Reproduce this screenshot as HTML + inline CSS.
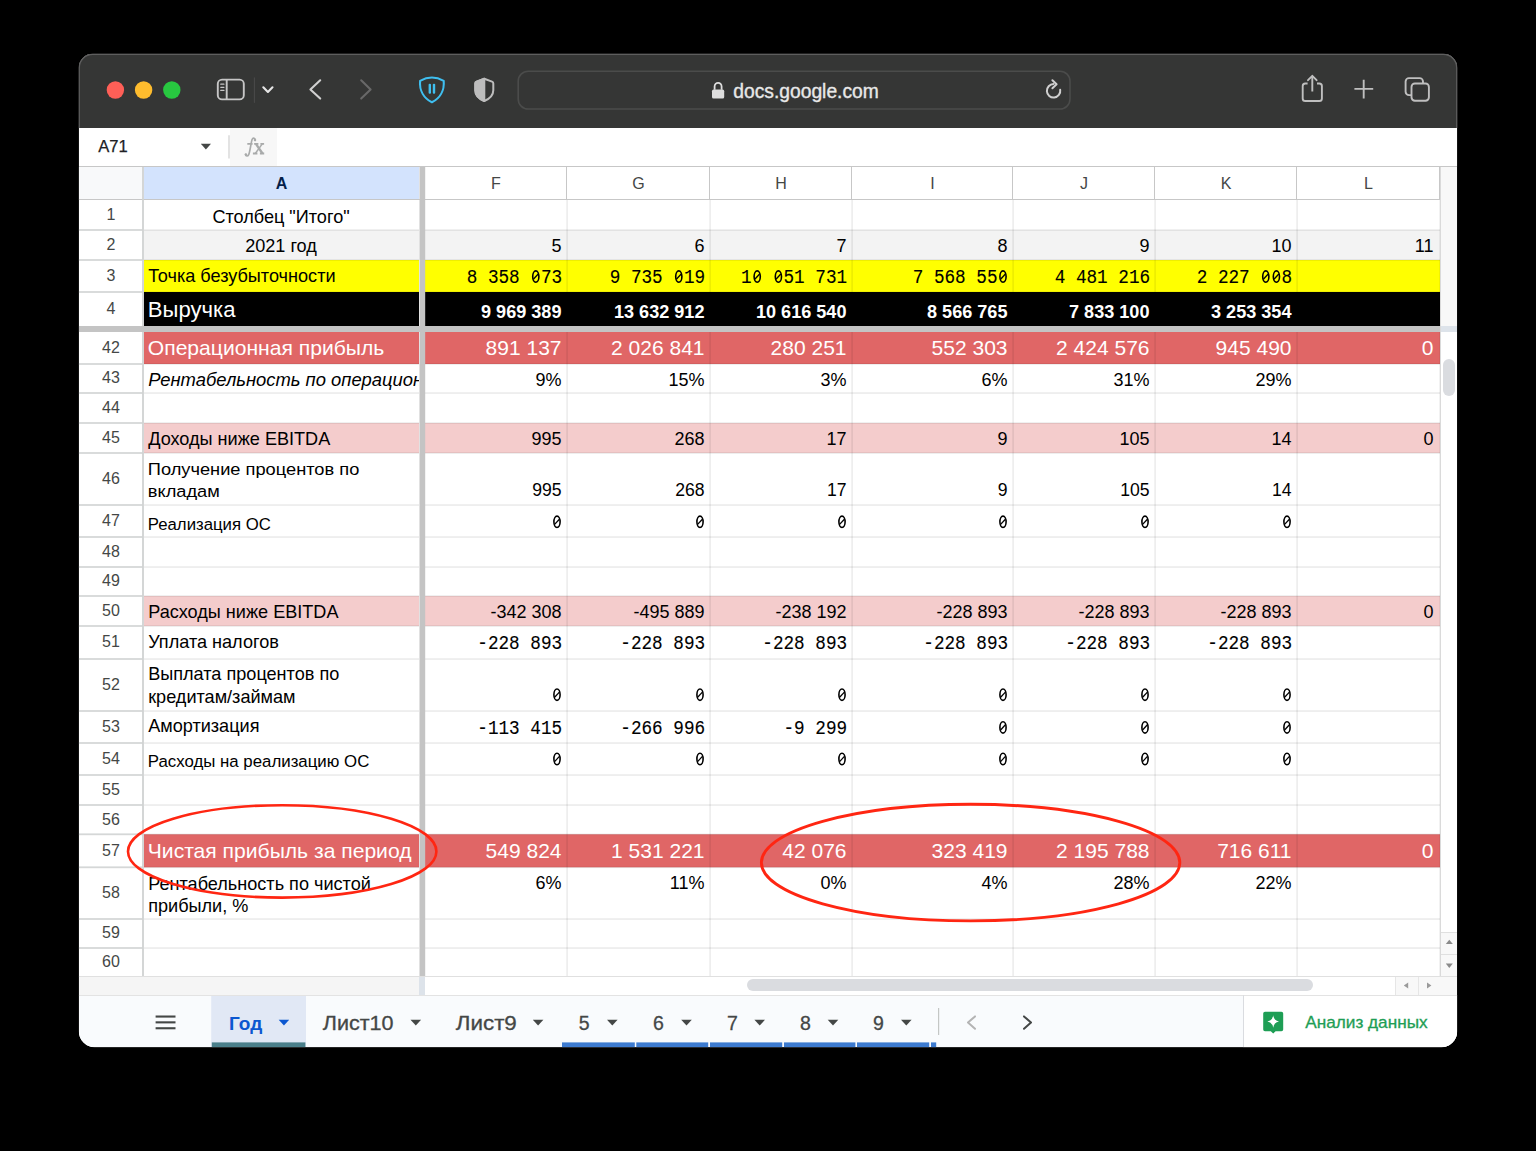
<!DOCTYPE html>
<html><head><meta charset="utf-8"><style>
html,body{margin:0;padding:0;background:#000;width:1536px;height:1151px;overflow:hidden}
svg{display:block}
</style></head><body>
<svg width="1536" height="1151" viewBox="0 0 1536 1151">
<defs><clipPath id="win"><path d="M92.8,53.8 H1443.2 A14,14 0 0 1 1457.2,67.8 V1031.3 A16,16 0 0 1 1441.2,1047.3 H94.8 A16,16 0 0 1 78.8,1031.3 V67.8 A14,14 0 0 1 92.8,53.8 Z"/></clipPath><clipPath id="tbclip"><rect x="0" y="0" width="1536" height="128"/></clipPath><clipPath id="colA"><rect x="144" y="167" width="275" height="809"/></clipPath></defs>
<rect x="0" y="0" width="1536" height="1151" fill="#000" />
<g clip-path="url(#win)">
<rect x="78.8" y="53.8" width="1378.4" height="993.5" fill="#ffffff" />
<rect x="78.8" y="53.8" width="1378.4" height="74.2" fill="#353635" />
<rect x="78.8" y="128" width="1378.4" height="38" fill="#ffffff" />
<rect x="230" y="128" width="47" height="38" fill="#f7f7f7" />
<rect x="78.8" y="166" width="1378.4" height="1" fill="#c7c7c7" />
<rect x="78.8" y="167" width="1361.2" height="33" fill="#ffffff" />
<rect x="78.8" y="167" width="64.2" height="33" fill="#f8f9fa" />
<rect x="144" y="167" width="275" height="33" fill="#d3e3fd" />
<rect x="78.8" y="200" width="64.2" height="776" fill="#ffffff" />
<rect x="144" y="230" width="275" height="30" fill="#f3f3f3" />
<rect x="425" y="230" width="1015" height="30" fill="#f3f3f3" />
<rect x="144" y="260" width="275" height="32" fill="#ffff00" />
<rect x="425" y="260" width="1015" height="32" fill="#ffff00" />
<rect x="144" y="292" width="275" height="34" fill="#000000" />
<rect x="425" y="292" width="1015" height="34" fill="#000000" />
<rect x="144" y="332" width="275" height="32" fill="#e06666" />
<rect x="425" y="332" width="1015" height="32" fill="#e06666" />
<rect x="144" y="423" width="275" height="30" fill="#f4cccc" />
<rect x="425" y="423" width="1015" height="30" fill="#f4cccc" />
<rect x="144" y="596" width="275" height="30" fill="#f4cccc" />
<rect x="425" y="596" width="1015" height="30" fill="#f4cccc" />
<rect x="144" y="834.3" width="275" height="33.0" fill="#e06666" />
<rect x="425" y="834.3" width="1015" height="33.0" fill="#e06666" />
<rect x="144" y="229.3" width="275" height="1.5" fill="rgba(0,0,0,0.085)" />
<rect x="425" y="229.3" width="1015" height="1.5" fill="rgba(0,0,0,0.085)" />
<rect x="78.8" y="229.1" width="64.2" height="1.8" fill="#d5d7d7" />
<rect x="144" y="259.3" width="275" height="1.5" fill="rgba(0,0,0,0.085)" />
<rect x="425" y="259.3" width="1015" height="1.5" fill="rgba(0,0,0,0.085)" />
<rect x="78.8" y="259.1" width="64.2" height="1.8" fill="#d5d7d7" />
<rect x="144" y="291.3" width="275" height="1.5" fill="rgba(0,0,0,0.085)" />
<rect x="425" y="291.3" width="1015" height="1.5" fill="rgba(0,0,0,0.085)" />
<rect x="78.8" y="291.1" width="64.2" height="1.8" fill="#d5d7d7" />
<rect x="144" y="363.3" width="275" height="1.5" fill="rgba(0,0,0,0.085)" />
<rect x="425" y="363.3" width="1015" height="1.5" fill="rgba(0,0,0,0.085)" />
<rect x="78.8" y="363.1" width="64.2" height="1.8" fill="#d5d7d7" />
<rect x="144" y="392.3" width="275" height="1.5" fill="rgba(0,0,0,0.085)" />
<rect x="425" y="392.3" width="1015" height="1.5" fill="rgba(0,0,0,0.085)" />
<rect x="78.8" y="392.1" width="64.2" height="1.8" fill="#d5d7d7" />
<rect x="144" y="422.3" width="275" height="1.5" fill="rgba(0,0,0,0.085)" />
<rect x="425" y="422.3" width="1015" height="1.5" fill="rgba(0,0,0,0.085)" />
<rect x="78.8" y="422.1" width="64.2" height="1.8" fill="#d5d7d7" />
<rect x="144" y="452.3" width="275" height="1.5" fill="rgba(0,0,0,0.085)" />
<rect x="425" y="452.3" width="1015" height="1.5" fill="rgba(0,0,0,0.085)" />
<rect x="78.8" y="452.1" width="64.2" height="1.8" fill="#d5d7d7" />
<rect x="144" y="504.3" width="275" height="1.5" fill="rgba(0,0,0,0.085)" />
<rect x="425" y="504.3" width="1015" height="1.5" fill="rgba(0,0,0,0.085)" />
<rect x="78.8" y="504.1" width="64.2" height="1.8" fill="#d5d7d7" />
<rect x="144" y="536.3" width="275" height="1.5" fill="rgba(0,0,0,0.085)" />
<rect x="425" y="536.3" width="1015" height="1.5" fill="rgba(0,0,0,0.085)" />
<rect x="78.8" y="536.1" width="64.2" height="1.8" fill="#d5d7d7" />
<rect x="144" y="566.3" width="275" height="1.5" fill="rgba(0,0,0,0.085)" />
<rect x="425" y="566.3" width="1015" height="1.5" fill="rgba(0,0,0,0.085)" />
<rect x="78.8" y="566.1" width="64.2" height="1.8" fill="#d5d7d7" />
<rect x="144" y="595.3" width="275" height="1.5" fill="rgba(0,0,0,0.085)" />
<rect x="425" y="595.3" width="1015" height="1.5" fill="rgba(0,0,0,0.085)" />
<rect x="78.8" y="595.1" width="64.2" height="1.8" fill="#d5d7d7" />
<rect x="144" y="625.3" width="275" height="1.5" fill="rgba(0,0,0,0.085)" />
<rect x="425" y="625.3" width="1015" height="1.5" fill="rgba(0,0,0,0.085)" />
<rect x="78.8" y="625.1" width="64.2" height="1.8" fill="#d5d7d7" />
<rect x="144" y="658.3" width="275" height="1.5" fill="rgba(0,0,0,0.085)" />
<rect x="425" y="658.3" width="1015" height="1.5" fill="rgba(0,0,0,0.085)" />
<rect x="78.8" y="658.1" width="64.2" height="1.8" fill="#d5d7d7" />
<rect x="144" y="710.3" width="275" height="1.5" fill="rgba(0,0,0,0.085)" />
<rect x="425" y="710.3" width="1015" height="1.5" fill="rgba(0,0,0,0.085)" />
<rect x="78.8" y="710.1" width="64.2" height="1.8" fill="#d5d7d7" />
<rect x="144" y="742.3" width="275" height="1.5" fill="rgba(0,0,0,0.085)" />
<rect x="425" y="742.3" width="1015" height="1.5" fill="rgba(0,0,0,0.085)" />
<rect x="78.8" y="742.1" width="64.2" height="1.8" fill="#d5d7d7" />
<rect x="144" y="774.3" width="275" height="1.5" fill="rgba(0,0,0,0.085)" />
<rect x="425" y="774.3" width="1015" height="1.5" fill="rgba(0,0,0,0.085)" />
<rect x="78.8" y="774.1" width="64.2" height="1.8" fill="#d5d7d7" />
<rect x="144" y="804.3" width="275" height="1.5" fill="rgba(0,0,0,0.085)" />
<rect x="425" y="804.3" width="1015" height="1.5" fill="rgba(0,0,0,0.085)" />
<rect x="78.8" y="804.1" width="64.2" height="1.8" fill="#d5d7d7" />
<rect x="144" y="833.5999999999999" width="275" height="1.5" fill="rgba(0,0,0,0.085)" />
<rect x="425" y="833.5999999999999" width="1015" height="1.5" fill="rgba(0,0,0,0.085)" />
<rect x="78.8" y="833.4" width="64.2" height="1.8" fill="#d5d7d7" />
<rect x="144" y="866.5999999999999" width="275" height="1.5" fill="rgba(0,0,0,0.085)" />
<rect x="425" y="866.5999999999999" width="1015" height="1.5" fill="rgba(0,0,0,0.085)" />
<rect x="78.8" y="866.4" width="64.2" height="1.8" fill="#d5d7d7" />
<rect x="144" y="918.3" width="275" height="1.5" fill="rgba(0,0,0,0.085)" />
<rect x="425" y="918.3" width="1015" height="1.5" fill="rgba(0,0,0,0.085)" />
<rect x="78.8" y="918.1" width="64.2" height="1.8" fill="#d5d7d7" />
<rect x="144" y="947.3" width="275" height="1.5" fill="rgba(0,0,0,0.085)" />
<rect x="425" y="947.3" width="1015" height="1.5" fill="rgba(0,0,0,0.085)" />
<rect x="78.8" y="947.1" width="64.2" height="1.8" fill="#d5d7d7" />
<rect x="566.4" y="200" width="1.4" height="126" fill="rgba(0,0,0,0.085)" />
<rect x="566.4" y="332" width="1.4" height="644" fill="rgba(0,0,0,0.085)" />
<rect x="709.4" y="200" width="1.4" height="126" fill="rgba(0,0,0,0.085)" />
<rect x="709.4" y="332" width="1.4" height="644" fill="rgba(0,0,0,0.085)" />
<rect x="851.4" y="200" width="1.4" height="126" fill="rgba(0,0,0,0.085)" />
<rect x="851.4" y="332" width="1.4" height="644" fill="rgba(0,0,0,0.085)" />
<rect x="1012.4" y="200" width="1.4" height="126" fill="rgba(0,0,0,0.085)" />
<rect x="1012.4" y="332" width="1.4" height="644" fill="rgba(0,0,0,0.085)" />
<rect x="1154.4" y="200" width="1.4" height="126" fill="rgba(0,0,0,0.085)" />
<rect x="1154.4" y="332" width="1.4" height="644" fill="rgba(0,0,0,0.085)" />
<rect x="1296.4" y="200" width="1.4" height="126" fill="rgba(0,0,0,0.085)" />
<rect x="1296.4" y="332" width="1.4" height="644" fill="rgba(0,0,0,0.085)" />
<rect x="1439.4" y="200" width="1.4" height="126" fill="rgba(0,0,0,0.085)" />
<rect x="1439.4" y="332" width="1.4" height="644" fill="rgba(0,0,0,0.085)" />
<rect x="78.8" y="199" width="1361.2" height="1" fill="#c7c7c7" />
<rect x="566" y="167" width="1" height="33" fill="#c7c7c7" />
<rect x="709" y="167" width="1" height="33" fill="#c7c7c7" />
<rect x="851" y="167" width="1" height="33" fill="#c7c7c7" />
<rect x="1012" y="167" width="1" height="33" fill="#c7c7c7" />
<rect x="1154" y="167" width="1" height="33" fill="#c7c7c7" />
<rect x="1296" y="167" width="1" height="33" fill="#c7c7c7" />
<rect x="1439" y="167" width="1" height="33" fill="#c7c7c7" />
<rect x="142.1" y="167" width="1.8" height="809" fill="#d0d2d2" />
<rect x="419.5" y="167" width="5.7" height="809" fill="#c4c4c4" />
<rect x="78.8" y="326" width="1361.2" height="6" fill="#c4c4c4" />
<rect x="1440" y="167" width="17" height="809" fill="#f8f8f8" />
<rect x="1440" y="167" width="1" height="809" fill="#dadada" />
<rect x="1441" y="332" width="16" height="600" fill="#ffffff" />
<rect x="1441" y="326" width="16" height="6" fill="#dde3ea" />
<rect x="1443" y="359" width="12" height="37" fill="#dadce0" rx="6"/>
<rect x="78.8" y="976" width="340.2" height="19" fill="#f5f5f5" />
<rect x="419" y="976" width="6" height="19" fill="#dde3ea" />
<rect x="425" y="976" width="1032" height="19" fill="#ffffff" />
<rect x="1395" y="976" width="62" height="19" fill="#f8f8f8" />
<rect x="78.8" y="976" width="1378.2" height="1" fill="#e0e0e0" />
<rect x="747" y="979" width="566" height="12" fill="#dadce0" rx="6"/>
<text x="281.5" y="188.7" font-family='"Liberation Sans", sans-serif' font-size="16" fill="#041e49" text-anchor="middle" font-weight="bold" font-style="normal" >A</text>
<text x="496.0" y="188.7" font-family='"Liberation Sans", sans-serif' font-size="16" fill="#444746" text-anchor="middle" font-weight="normal" font-style="normal" >F</text>
<text x="638.5" y="188.7" font-family='"Liberation Sans", sans-serif' font-size="16" fill="#444746" text-anchor="middle" font-weight="normal" font-style="normal" >G</text>
<text x="781.0" y="188.7" font-family='"Liberation Sans", sans-serif' font-size="16" fill="#444746" text-anchor="middle" font-weight="normal" font-style="normal" >H</text>
<text x="932.5" y="188.7" font-family='"Liberation Sans", sans-serif' font-size="16" fill="#444746" text-anchor="middle" font-weight="normal" font-style="normal" >I</text>
<text x="1084.0" y="188.7" font-family='"Liberation Sans", sans-serif' font-size="16" fill="#444746" text-anchor="middle" font-weight="normal" font-style="normal" >J</text>
<text x="1226.0" y="188.7" font-family='"Liberation Sans", sans-serif' font-size="16" fill="#444746" text-anchor="middle" font-weight="normal" font-style="normal" >K</text>
<text x="1368.5" y="188.7" font-family='"Liberation Sans", sans-serif' font-size="16" fill="#444746" text-anchor="middle" font-weight="normal" font-style="normal" >L</text>
<text x="111" y="219.9" font-family='"Liberation Sans", sans-serif' font-size="16" fill="#444746" text-anchor="middle" font-weight="normal" font-style="normal" >1</text>
<text x="111" y="249.9" font-family='"Liberation Sans", sans-serif' font-size="16" fill="#444746" text-anchor="middle" font-weight="normal" font-style="normal" >2</text>
<text x="111" y="280.9" font-family='"Liberation Sans", sans-serif' font-size="16" fill="#444746" text-anchor="middle" font-weight="normal" font-style="normal" >3</text>
<text x="111" y="313.9" font-family='"Liberation Sans", sans-serif' font-size="16" fill="#444746" text-anchor="middle" font-weight="normal" font-style="normal" >4</text>
<text x="111" y="352.9" font-family='"Liberation Sans", sans-serif' font-size="16" fill="#444746" text-anchor="middle" font-weight="normal" font-style="normal" >42</text>
<text x="111" y="383.4" font-family='"Liberation Sans", sans-serif' font-size="16" fill="#444746" text-anchor="middle" font-weight="normal" font-style="normal" >43</text>
<text x="111" y="412.9" font-family='"Liberation Sans", sans-serif' font-size="16" fill="#444746" text-anchor="middle" font-weight="normal" font-style="normal" >44</text>
<text x="111" y="442.9" font-family='"Liberation Sans", sans-serif' font-size="16" fill="#444746" text-anchor="middle" font-weight="normal" font-style="normal" >45</text>
<text x="111" y="483.9" font-family='"Liberation Sans", sans-serif' font-size="16" fill="#444746" text-anchor="middle" font-weight="normal" font-style="normal" >46</text>
<text x="111" y="525.9" font-family='"Liberation Sans", sans-serif' font-size="16" fill="#444746" text-anchor="middle" font-weight="normal" font-style="normal" >47</text>
<text x="111" y="556.9" font-family='"Liberation Sans", sans-serif' font-size="16" fill="#444746" text-anchor="middle" font-weight="normal" font-style="normal" >48</text>
<text x="111" y="586.4" font-family='"Liberation Sans", sans-serif' font-size="16" fill="#444746" text-anchor="middle" font-weight="normal" font-style="normal" >49</text>
<text x="111" y="615.9" font-family='"Liberation Sans", sans-serif' font-size="16" fill="#444746" text-anchor="middle" font-weight="normal" font-style="normal" >50</text>
<text x="111" y="647.4" font-family='"Liberation Sans", sans-serif' font-size="16" fill="#444746" text-anchor="middle" font-weight="normal" font-style="normal" >51</text>
<text x="111" y="689.9" font-family='"Liberation Sans", sans-serif' font-size="16" fill="#444746" text-anchor="middle" font-weight="normal" font-style="normal" >52</text>
<text x="111" y="731.9" font-family='"Liberation Sans", sans-serif' font-size="16" fill="#444746" text-anchor="middle" font-weight="normal" font-style="normal" >53</text>
<text x="111" y="763.9" font-family='"Liberation Sans", sans-serif' font-size="16" fill="#444746" text-anchor="middle" font-weight="normal" font-style="normal" >54</text>
<text x="111" y="794.9" font-family='"Liberation Sans", sans-serif' font-size="16" fill="#444746" text-anchor="middle" font-weight="normal" font-style="normal" >55</text>
<text x="111" y="824.55" font-family='"Liberation Sans", sans-serif' font-size="16" fill="#444746" text-anchor="middle" font-weight="normal" font-style="normal" >56</text>
<text x="111" y="855.6999999999999" font-family='"Liberation Sans", sans-serif' font-size="16" fill="#444746" text-anchor="middle" font-weight="normal" font-style="normal" >57</text>
<text x="111" y="898.05" font-family='"Liberation Sans", sans-serif' font-size="16" fill="#444746" text-anchor="middle" font-weight="normal" font-style="normal" >58</text>
<text x="111" y="938.4" font-family='"Liberation Sans", sans-serif' font-size="16" fill="#444746" text-anchor="middle" font-weight="normal" font-style="normal" >59</text>
<text x="111" y="966.9" font-family='"Liberation Sans", sans-serif' font-size="16" fill="#444746" text-anchor="middle" font-weight="normal" font-style="normal" >60</text>
<text x="281" y="223" font-family='"Liberation Sans", sans-serif' font-size="18.1" fill="#000" text-anchor="middle" font-weight="normal" font-style="normal" >Столбец "Итого"</text>
<text x="281" y="252" font-family='"Liberation Sans", sans-serif' font-size="18.1" fill="#000" text-anchor="middle" font-weight="normal" font-style="normal" >2021 год</text>
<text x="561.5" y="252" font-family='"Liberation Sans", sans-serif' font-size="18" fill="#000" text-anchor="end" font-weight="normal" font-style="normal" >5</text>
<text x="704.5" y="252" font-family='"Liberation Sans", sans-serif' font-size="18" fill="#000" text-anchor="end" font-weight="normal" font-style="normal" >6</text>
<text x="846.5" y="252" font-family='"Liberation Sans", sans-serif' font-size="18" fill="#000" text-anchor="end" font-weight="normal" font-style="normal" >7</text>
<text x="1007.5" y="252" font-family='"Liberation Sans", sans-serif' font-size="18" fill="#000" text-anchor="end" font-weight="normal" font-style="normal" >8</text>
<text x="1149.5" y="252" font-family='"Liberation Sans", sans-serif' font-size="18" fill="#000" text-anchor="end" font-weight="normal" font-style="normal" >9</text>
<text x="1291.5" y="252" font-family='"Liberation Sans", sans-serif' font-size="18" fill="#000" text-anchor="end" font-weight="normal" font-style="normal" >10</text>
<text x="1433.5" y="252" font-family='"Liberation Sans", sans-serif' font-size="18" fill="#000" text-anchor="end" font-weight="normal" font-style="normal" >11</text>
<text x="148.2" y="281.5" font-family='"Liberation Sans", sans-serif' font-size="18.1" fill="#000" text-anchor="start" font-weight="normal" font-style="normal" >Точка безубыточности</text>
<text x="562.1" y="283" font-family='"Liberation Mono", monospace' font-size="20" fill="#000" text-anchor="end" font-weight="normal" font-style="normal" textLength="95.4" lengthAdjust="spacingAndGlyphs" stroke="#000" stroke-width="0.12">8 358  73</text>
<ellipse cx="535.80" cy="276.60" rx="3.1" ry="5.7" fill="none" stroke="#000" stroke-width="1.6"/>
<line x1="538.20" y1="274.00" x2="533.40" y2="279.20" stroke="#000" stroke-width="1.3"/>
<text x="705.1" y="283" font-family='"Liberation Mono", monospace' font-size="20" fill="#000" text-anchor="end" font-weight="normal" font-style="normal" textLength="95.4" lengthAdjust="spacingAndGlyphs" stroke="#000" stroke-width="0.12">9 735  19</text>
<ellipse cx="678.80" cy="276.60" rx="3.1" ry="5.7" fill="none" stroke="#000" stroke-width="1.6"/>
<line x1="681.20" y1="274.00" x2="676.40" y2="279.20" stroke="#000" stroke-width="1.3"/>
<text x="847.1" y="283" font-family='"Liberation Mono", monospace' font-size="20" fill="#000" text-anchor="end" font-weight="normal" font-style="normal" textLength="106.0" lengthAdjust="spacingAndGlyphs" stroke="#000" stroke-width="0.12">1   51 731</text>
<ellipse cx="757.20" cy="276.60" rx="3.1" ry="5.7" fill="none" stroke="#000" stroke-width="1.6"/>
<line x1="759.60" y1="274.00" x2="754.80" y2="279.20" stroke="#000" stroke-width="1.3"/>
<ellipse cx="778.40" cy="276.60" rx="3.1" ry="5.7" fill="none" stroke="#000" stroke-width="1.6"/>
<line x1="780.80" y1="274.00" x2="776.00" y2="279.20" stroke="#000" stroke-width="1.3"/>
<text x="1008.1" y="283" font-family='"Liberation Mono", monospace' font-size="20" fill="#000" text-anchor="end" font-weight="normal" font-style="normal" textLength="95.4" lengthAdjust="spacingAndGlyphs" stroke="#000" stroke-width="0.12">7 568 55 </text>
<ellipse cx="1003.00" cy="276.60" rx="3.1" ry="5.7" fill="none" stroke="#000" stroke-width="1.6"/>
<line x1="1005.40" y1="274.00" x2="1000.60" y2="279.20" stroke="#000" stroke-width="1.3"/>
<text x="1150.1" y="283" font-family='"Liberation Mono", monospace' font-size="20" fill="#000" text-anchor="end" font-weight="normal" font-style="normal" textLength="95.4" lengthAdjust="spacingAndGlyphs" stroke="#000" stroke-width="0.12">4 481 216</text>
<text x="1292.1" y="283" font-family='"Liberation Mono", monospace' font-size="20" fill="#000" text-anchor="end" font-weight="normal" font-style="normal" textLength="95.4" lengthAdjust="spacingAndGlyphs" stroke="#000" stroke-width="0.12">2 227   8</text>
<ellipse cx="1265.80" cy="276.60" rx="3.1" ry="5.7" fill="none" stroke="#000" stroke-width="1.6"/>
<line x1="1268.20" y1="274.00" x2="1263.40" y2="279.20" stroke="#000" stroke-width="1.3"/>
<ellipse cx="1276.40" cy="276.60" rx="3.1" ry="5.7" fill="none" stroke="#000" stroke-width="1.6"/>
<line x1="1278.80" y1="274.00" x2="1274.00" y2="279.20" stroke="#000" stroke-width="1.3"/>
<text x="147.8" y="317" font-family='"Liberation Sans", sans-serif' font-size="22.1" fill="#fff" text-anchor="start" font-weight="normal" font-style="normal" >Выручка</text>
<text x="561.5" y="318.2" font-family='"Liberation Sans", sans-serif' font-size="18.1" fill="#fff" text-anchor="end" font-weight="bold" font-style="normal" >9 969 389</text>
<text x="704.5" y="318.2" font-family='"Liberation Sans", sans-serif' font-size="18.1" fill="#fff" text-anchor="end" font-weight="bold" font-style="normal" >13 632 912</text>
<text x="846.5" y="318.2" font-family='"Liberation Sans", sans-serif' font-size="18.1" fill="#fff" text-anchor="end" font-weight="bold" font-style="normal" >10 616 540</text>
<text x="1007.5" y="318.2" font-family='"Liberation Sans", sans-serif' font-size="18.1" fill="#fff" text-anchor="end" font-weight="bold" font-style="normal" >8 566 765</text>
<text x="1149.5" y="318.2" font-family='"Liberation Sans", sans-serif' font-size="18.1" fill="#fff" text-anchor="end" font-weight="bold" font-style="normal" >7 833 100</text>
<text x="1291.5" y="318.2" font-family='"Liberation Sans", sans-serif' font-size="18.1" fill="#fff" text-anchor="end" font-weight="bold" font-style="normal" >3 253 354</text>
<text x="147.8" y="355" font-family='"Liberation Sans", sans-serif' font-size="21.1" fill="#fff" text-anchor="start" font-weight="normal" font-style="normal" >Операционная прибыль</text>
<text x="561.5" y="354.8" font-family='"Liberation Sans", sans-serif' font-size="21" fill="#fff" text-anchor="end" font-weight="normal" font-style="normal" >891 137</text>
<text x="704.5" y="354.8" font-family='"Liberation Sans", sans-serif' font-size="21" fill="#fff" text-anchor="end" font-weight="normal" font-style="normal" >2 026 841</text>
<text x="846.5" y="354.8" font-family='"Liberation Sans", sans-serif' font-size="21" fill="#fff" text-anchor="end" font-weight="normal" font-style="normal" >280 251</text>
<text x="1007.5" y="354.8" font-family='"Liberation Sans", sans-serif' font-size="21" fill="#fff" text-anchor="end" font-weight="normal" font-style="normal" >552 303</text>
<text x="1149.5" y="354.8" font-family='"Liberation Sans", sans-serif' font-size="21" fill="#fff" text-anchor="end" font-weight="normal" font-style="normal" >2 424 576</text>
<text x="1291.5" y="354.8" font-family='"Liberation Sans", sans-serif' font-size="21" fill="#fff" text-anchor="end" font-weight="normal" font-style="normal" >945 490</text>
<text x="1433.5" y="354.8" font-family='"Liberation Sans", sans-serif' font-size="21" fill="#fff" text-anchor="end" font-weight="normal" font-style="normal" >0</text>
<g clip-path="url(#colA)">
<text x="148.2" y="385.5" font-family='"Liberation Sans", sans-serif' font-size="18.4" fill="#000" text-anchor="start" font-weight="normal" font-style="italic" >Рентабельность по операционной деятельности, %</text>
</g>
<text x="561.5" y="385.5" font-family='"Liberation Sans", sans-serif' font-size="18" fill="#000" text-anchor="end" font-weight="normal" font-style="normal" >9%</text>
<text x="704.5" y="385.5" font-family='"Liberation Sans", sans-serif' font-size="18" fill="#000" text-anchor="end" font-weight="normal" font-style="normal" >15%</text>
<text x="846.5" y="385.5" font-family='"Liberation Sans", sans-serif' font-size="18" fill="#000" text-anchor="end" font-weight="normal" font-style="normal" >3%</text>
<text x="1007.5" y="385.5" font-family='"Liberation Sans", sans-serif' font-size="18" fill="#000" text-anchor="end" font-weight="normal" font-style="normal" >6%</text>
<text x="1149.5" y="385.5" font-family='"Liberation Sans", sans-serif' font-size="18" fill="#000" text-anchor="end" font-weight="normal" font-style="normal" >31%</text>
<text x="1291.5" y="385.5" font-family='"Liberation Sans", sans-serif' font-size="18" fill="#000" text-anchor="end" font-weight="normal" font-style="normal" >29%</text>
<text x="148.2" y="445" font-family='"Liberation Sans", sans-serif' font-size="18.1" fill="#000" text-anchor="start" font-weight="normal" font-style="normal" >Доходы ниже EBITDA</text>
<text x="561.5" y="445" font-family='"Liberation Sans", sans-serif' font-size="18" fill="#000" text-anchor="end" font-weight="normal" font-style="normal" >995</text>
<text x="704.5" y="445" font-family='"Liberation Sans", sans-serif' font-size="18" fill="#000" text-anchor="end" font-weight="normal" font-style="normal" >268</text>
<text x="846.5" y="445" font-family='"Liberation Sans", sans-serif' font-size="18" fill="#000" text-anchor="end" font-weight="normal" font-style="normal" >17</text>
<text x="1007.5" y="445" font-family='"Liberation Sans", sans-serif' font-size="18" fill="#000" text-anchor="end" font-weight="normal" font-style="normal" >9</text>
<text x="1149.5" y="445" font-family='"Liberation Sans", sans-serif' font-size="18" fill="#000" text-anchor="end" font-weight="normal" font-style="normal" >105</text>
<text x="1291.5" y="445" font-family='"Liberation Sans", sans-serif' font-size="18" fill="#000" text-anchor="end" font-weight="normal" font-style="normal" >14</text>
<text x="1433.5" y="445" font-family='"Liberation Sans", sans-serif' font-size="18" fill="#000" text-anchor="end" font-weight="normal" font-style="normal" >0</text>
<text x="147.8" y="474.5" font-family='"Liberation Sans", sans-serif' font-size="17.4" fill="#000" text-anchor="start" font-weight="normal" font-style="normal" textLength="211.5" lengthAdjust="spacingAndGlyphs" >Получение процентов по</text>
<text x="147.8" y="497.2" font-family='"Liberation Sans", sans-serif' font-size="17.4" fill="#000" text-anchor="start" font-weight="normal" font-style="normal" textLength="72" lengthAdjust="spacingAndGlyphs" >вкладам</text>
<text x="561.5" y="495.5" font-family='"Liberation Sans", sans-serif' font-size="17.6" fill="#000" text-anchor="end" font-weight="normal" font-style="normal" >995</text>
<text x="704.5" y="495.5" font-family='"Liberation Sans", sans-serif' font-size="17.6" fill="#000" text-anchor="end" font-weight="normal" font-style="normal" >268</text>
<text x="846.5" y="495.5" font-family='"Liberation Sans", sans-serif' font-size="17.6" fill="#000" text-anchor="end" font-weight="normal" font-style="normal" >17</text>
<text x="1007.5" y="495.5" font-family='"Liberation Sans", sans-serif' font-size="17.6" fill="#000" text-anchor="end" font-weight="normal" font-style="normal" >9</text>
<text x="1149.5" y="495.5" font-family='"Liberation Sans", sans-serif' font-size="17.6" fill="#000" text-anchor="end" font-weight="normal" font-style="normal" >105</text>
<text x="1291.5" y="495.5" font-family='"Liberation Sans", sans-serif' font-size="17.6" fill="#000" text-anchor="end" font-weight="normal" font-style="normal" >14</text>
<text x="147.8" y="529.6" font-family='"Liberation Sans", sans-serif' font-size="17.4" fill="#000" text-anchor="start" font-weight="normal" font-style="normal" textLength="123" lengthAdjust="spacingAndGlyphs" >Реализация ОС</text>
<ellipse cx="557.00" cy="521.80" rx="3.1" ry="5.7" fill="none" stroke="#000" stroke-width="1.6"/>
<line x1="559.40" y1="519.20" x2="554.60" y2="524.40" stroke="#000" stroke-width="1.3"/>
<ellipse cx="700.00" cy="521.80" rx="3.1" ry="5.7" fill="none" stroke="#000" stroke-width="1.6"/>
<line x1="702.40" y1="519.20" x2="697.60" y2="524.40" stroke="#000" stroke-width="1.3"/>
<ellipse cx="842.00" cy="521.80" rx="3.1" ry="5.7" fill="none" stroke="#000" stroke-width="1.6"/>
<line x1="844.40" y1="519.20" x2="839.60" y2="524.40" stroke="#000" stroke-width="1.3"/>
<ellipse cx="1003.00" cy="521.80" rx="3.1" ry="5.7" fill="none" stroke="#000" stroke-width="1.6"/>
<line x1="1005.40" y1="519.20" x2="1000.60" y2="524.40" stroke="#000" stroke-width="1.3"/>
<ellipse cx="1145.00" cy="521.80" rx="3.1" ry="5.7" fill="none" stroke="#000" stroke-width="1.6"/>
<line x1="1147.40" y1="519.20" x2="1142.60" y2="524.40" stroke="#000" stroke-width="1.3"/>
<ellipse cx="1287.00" cy="521.80" rx="3.1" ry="5.7" fill="none" stroke="#000" stroke-width="1.6"/>
<line x1="1289.40" y1="519.20" x2="1284.60" y2="524.40" stroke="#000" stroke-width="1.3"/>
<text x="148.2" y="617.6" font-family='"Liberation Sans", sans-serif' font-size="18.1" fill="#000" text-anchor="start" font-weight="normal" font-style="normal" >Расходы ниже EBITDA</text>
<text x="561.5" y="617.6" font-family='"Liberation Sans", sans-serif' font-size="18" fill="#000" text-anchor="end" font-weight="normal" font-style="normal" >-342 308</text>
<text x="704.5" y="617.6" font-family='"Liberation Sans", sans-serif' font-size="18" fill="#000" text-anchor="end" font-weight="normal" font-style="normal" >-495 889</text>
<text x="846.5" y="617.6" font-family='"Liberation Sans", sans-serif' font-size="18" fill="#000" text-anchor="end" font-weight="normal" font-style="normal" >-238 192</text>
<text x="1007.5" y="617.6" font-family='"Liberation Sans", sans-serif' font-size="18" fill="#000" text-anchor="end" font-weight="normal" font-style="normal" >-228 893</text>
<text x="1149.5" y="617.6" font-family='"Liberation Sans", sans-serif' font-size="18" fill="#000" text-anchor="end" font-weight="normal" font-style="normal" >-228 893</text>
<text x="1291.5" y="617.6" font-family='"Liberation Sans", sans-serif' font-size="18" fill="#000" text-anchor="end" font-weight="normal" font-style="normal" >-228 893</text>
<text x="1433.5" y="617.6" font-family='"Liberation Sans", sans-serif' font-size="18" fill="#000" text-anchor="end" font-weight="normal" font-style="normal" >0</text>
<text x="148.2" y="648" font-family='"Liberation Sans", sans-serif' font-size="18.1" fill="#000" text-anchor="start" font-weight="normal" font-style="normal" >Уплата налогов</text>
<text x="562.1" y="648.7" font-family='"Liberation Mono", monospace' font-size="20" fill="#000" text-anchor="end" font-weight="normal" font-style="normal" textLength="84.8" lengthAdjust="spacingAndGlyphs" stroke="#000" stroke-width="0.12">-228 893</text>
<text x="705.1" y="648.7" font-family='"Liberation Mono", monospace' font-size="20" fill="#000" text-anchor="end" font-weight="normal" font-style="normal" textLength="84.8" lengthAdjust="spacingAndGlyphs" stroke="#000" stroke-width="0.12">-228 893</text>
<text x="847.1" y="648.7" font-family='"Liberation Mono", monospace' font-size="20" fill="#000" text-anchor="end" font-weight="normal" font-style="normal" textLength="84.8" lengthAdjust="spacingAndGlyphs" stroke="#000" stroke-width="0.12">-228 893</text>
<text x="1008.1" y="648.7" font-family='"Liberation Mono", monospace' font-size="20" fill="#000" text-anchor="end" font-weight="normal" font-style="normal" textLength="84.8" lengthAdjust="spacingAndGlyphs" stroke="#000" stroke-width="0.12">-228 893</text>
<text x="1150.1" y="648.7" font-family='"Liberation Mono", monospace' font-size="20" fill="#000" text-anchor="end" font-weight="normal" font-style="normal" textLength="84.8" lengthAdjust="spacingAndGlyphs" stroke="#000" stroke-width="0.12">-228 893</text>
<text x="1292.1" y="648.7" font-family='"Liberation Mono", monospace' font-size="20" fill="#000" text-anchor="end" font-weight="normal" font-style="normal" textLength="84.8" lengthAdjust="spacingAndGlyphs" stroke="#000" stroke-width="0.12">-228 893</text>
<text x="148.2" y="679.7" font-family='"Liberation Sans", sans-serif' font-size="18.1" fill="#000" text-anchor="start" font-weight="normal" font-style="normal" >Выплата процентов по</text>
<text x="148.2" y="702.5" font-family='"Liberation Sans", sans-serif' font-size="18.1" fill="#000" text-anchor="start" font-weight="normal" font-style="normal" >кредитам/займам</text>
<ellipse cx="557.00" cy="694.70" rx="3.1" ry="5.7" fill="none" stroke="#000" stroke-width="1.6"/>
<line x1="559.40" y1="692.10" x2="554.60" y2="697.30" stroke="#000" stroke-width="1.3"/>
<ellipse cx="700.00" cy="694.70" rx="3.1" ry="5.7" fill="none" stroke="#000" stroke-width="1.6"/>
<line x1="702.40" y1="692.10" x2="697.60" y2="697.30" stroke="#000" stroke-width="1.3"/>
<ellipse cx="842.00" cy="694.70" rx="3.1" ry="5.7" fill="none" stroke="#000" stroke-width="1.6"/>
<line x1="844.40" y1="692.10" x2="839.60" y2="697.30" stroke="#000" stroke-width="1.3"/>
<ellipse cx="1003.00" cy="694.70" rx="3.1" ry="5.7" fill="none" stroke="#000" stroke-width="1.6"/>
<line x1="1005.40" y1="692.10" x2="1000.60" y2="697.30" stroke="#000" stroke-width="1.3"/>
<ellipse cx="1145.00" cy="694.70" rx="3.1" ry="5.7" fill="none" stroke="#000" stroke-width="1.6"/>
<line x1="1147.40" y1="692.10" x2="1142.60" y2="697.30" stroke="#000" stroke-width="1.3"/>
<ellipse cx="1287.00" cy="694.70" rx="3.1" ry="5.7" fill="none" stroke="#000" stroke-width="1.6"/>
<line x1="1289.40" y1="692.10" x2="1284.60" y2="697.30" stroke="#000" stroke-width="1.3"/>
<text x="148.2" y="731.6" font-family='"Liberation Sans", sans-serif' font-size="18.1" fill="#000" text-anchor="start" font-weight="normal" font-style="normal" >Амортизация</text>
<text x="562.1" y="733.8" font-family='"Liberation Mono", monospace' font-size="20" fill="#000" text-anchor="end" font-weight="normal" font-style="normal" textLength="84.8" lengthAdjust="spacingAndGlyphs" stroke="#000" stroke-width="0.12">-113 415</text>
<text x="705.1" y="733.8" font-family='"Liberation Mono", monospace' font-size="20" fill="#000" text-anchor="end" font-weight="normal" font-style="normal" textLength="84.8" lengthAdjust="spacingAndGlyphs" stroke="#000" stroke-width="0.12">-266 996</text>
<text x="847.1" y="733.8" font-family='"Liberation Mono", monospace' font-size="20" fill="#000" text-anchor="end" font-weight="normal" font-style="normal" textLength="63.6" lengthAdjust="spacingAndGlyphs" stroke="#000" stroke-width="0.12">-9 299</text>
<ellipse cx="1003.00" cy="727.40" rx="3.1" ry="5.7" fill="none" stroke="#000" stroke-width="1.6"/>
<line x1="1005.40" y1="724.80" x2="1000.60" y2="730.00" stroke="#000" stroke-width="1.3"/>
<ellipse cx="1145.00" cy="727.40" rx="3.1" ry="5.7" fill="none" stroke="#000" stroke-width="1.6"/>
<line x1="1147.40" y1="724.80" x2="1142.60" y2="730.00" stroke="#000" stroke-width="1.3"/>
<ellipse cx="1287.00" cy="727.40" rx="3.1" ry="5.7" fill="none" stroke="#000" stroke-width="1.6"/>
<line x1="1289.40" y1="724.80" x2="1284.60" y2="730.00" stroke="#000" stroke-width="1.3"/>
<text x="147.8" y="767.2" font-family='"Liberation Sans", sans-serif' font-size="17.4" fill="#000" text-anchor="start" font-weight="normal" font-style="normal" textLength="221.5" lengthAdjust="spacingAndGlyphs" >Расходы на реализацию ОС</text>
<ellipse cx="557.00" cy="759.00" rx="3.1" ry="5.7" fill="none" stroke="#000" stroke-width="1.6"/>
<line x1="559.40" y1="756.40" x2="554.60" y2="761.60" stroke="#000" stroke-width="1.3"/>
<ellipse cx="700.00" cy="759.00" rx="3.1" ry="5.7" fill="none" stroke="#000" stroke-width="1.6"/>
<line x1="702.40" y1="756.40" x2="697.60" y2="761.60" stroke="#000" stroke-width="1.3"/>
<ellipse cx="842.00" cy="759.00" rx="3.1" ry="5.7" fill="none" stroke="#000" stroke-width="1.6"/>
<line x1="844.40" y1="756.40" x2="839.60" y2="761.60" stroke="#000" stroke-width="1.3"/>
<ellipse cx="1003.00" cy="759.00" rx="3.1" ry="5.7" fill="none" stroke="#000" stroke-width="1.6"/>
<line x1="1005.40" y1="756.40" x2="1000.60" y2="761.60" stroke="#000" stroke-width="1.3"/>
<ellipse cx="1145.00" cy="759.00" rx="3.1" ry="5.7" fill="none" stroke="#000" stroke-width="1.6"/>
<line x1="1147.40" y1="756.40" x2="1142.60" y2="761.60" stroke="#000" stroke-width="1.3"/>
<ellipse cx="1287.00" cy="759.00" rx="3.1" ry="5.7" fill="none" stroke="#000" stroke-width="1.6"/>
<line x1="1289.40" y1="756.40" x2="1284.60" y2="761.60" stroke="#000" stroke-width="1.3"/>
<text x="147.8" y="857.7" font-family='"Liberation Sans", sans-serif' font-size="21.1" fill="#fff" text-anchor="start" font-weight="normal" font-style="normal" >Чистая прибыль за период</text>
<text x="561.5" y="857.6" font-family='"Liberation Sans", sans-serif' font-size="21" fill="#fff" text-anchor="end" font-weight="normal" font-style="normal" >549 824</text>
<text x="704.5" y="857.6" font-family='"Liberation Sans", sans-serif' font-size="21" fill="#fff" text-anchor="end" font-weight="normal" font-style="normal" >1 531 221</text>
<text x="846.5" y="857.6" font-family='"Liberation Sans", sans-serif' font-size="21" fill="#fff" text-anchor="end" font-weight="normal" font-style="normal" >42 076</text>
<text x="1007.5" y="857.6" font-family='"Liberation Sans", sans-serif' font-size="21" fill="#fff" text-anchor="end" font-weight="normal" font-style="normal" >323 419</text>
<text x="1149.5" y="857.6" font-family='"Liberation Sans", sans-serif' font-size="21" fill="#fff" text-anchor="end" font-weight="normal" font-style="normal" >2 195 788</text>
<text x="1291.5" y="857.6" font-family='"Liberation Sans", sans-serif' font-size="21" fill="#fff" text-anchor="end" font-weight="normal" font-style="normal" >716 611</text>
<text x="1433.5" y="857.6" font-family='"Liberation Sans", sans-serif' font-size="21" fill="#fff" text-anchor="end" font-weight="normal" font-style="normal" >0</text>
<text x="148.2" y="889.5" font-family='"Liberation Sans", sans-serif' font-size="18.1" fill="#000" text-anchor="start" font-weight="normal" font-style="normal" >Рентабельность по чистой</text>
<text x="148.2" y="912" font-family='"Liberation Sans", sans-serif' font-size="18.1" fill="#000" text-anchor="start" font-weight="normal" font-style="normal" >прибыли, %</text>
<text x="561.5" y="889" font-family='"Liberation Sans", sans-serif' font-size="18" fill="#000" text-anchor="end" font-weight="normal" font-style="normal" >6%</text>
<text x="704.5" y="889" font-family='"Liberation Sans", sans-serif' font-size="18" fill="#000" text-anchor="end" font-weight="normal" font-style="normal" >11%</text>
<text x="846.5" y="889" font-family='"Liberation Sans", sans-serif' font-size="18" fill="#000" text-anchor="end" font-weight="normal" font-style="normal" >0%</text>
<text x="1007.5" y="889" font-family='"Liberation Sans", sans-serif' font-size="18" fill="#000" text-anchor="end" font-weight="normal" font-style="normal" >4%</text>
<text x="1149.5" y="889" font-family='"Liberation Sans", sans-serif' font-size="18" fill="#000" text-anchor="end" font-weight="normal" font-style="normal" >28%</text>
<text x="1291.5" y="889" font-family='"Liberation Sans", sans-serif' font-size="18" fill="#000" text-anchor="end" font-weight="normal" font-style="normal" >22%</text>
<ellipse cx="282.2" cy="851.4" rx="154.2" ry="46.2" fill="none" stroke="#ff2612" stroke-width="2.6"/>
<ellipse cx="970.6" cy="862.6" rx="209.2" ry="58.3" fill="none" stroke="#ff2612" stroke-width="2.9"/>
<circle cx="115.4" cy="90" r="8.7" fill="#fe5f57"/>
<circle cx="143.6" cy="90" r="8.7" fill="#febc2e"/>
<circle cx="171.8" cy="90" r="8.7" fill="#28c840"/>
<rect x="217.8" y="79.6" width="26" height="19.8" rx="4.2" fill="none" stroke="#c6c6c6" stroke-width="1.9"/>
<line x1="226.7" y1="80" x2="226.7" y2="99.5" stroke="#c6c6c6" stroke-width="1.9"/>
<line x1="220.8" y1="84.2" x2="223.9" y2="84.2" stroke="#c6c6c6" stroke-width="1.3" stroke-linecap="round"/>
<line x1="220.8" y1="87.3" x2="223.9" y2="87.3" stroke="#c6c6c6" stroke-width="1.3" stroke-linecap="round"/>
<line x1="220.8" y1="90.4" x2="223.9" y2="90.4" stroke="#c6c6c6" stroke-width="1.3" stroke-linecap="round"/>
<line x1="254.4" y1="77.5" x2="254.4" y2="102.8" stroke="#4c4c4c" stroke-width="1"/>
<polyline points="263.3,87.3 267.9,91.9 272.5,87.3" fill="none" stroke="#e6e6e6" stroke-width="2.1" stroke-linecap="round" stroke-linejoin="round"/>
<polyline points="320.2,80.3 310.4,89.4 320.2,98.6" fill="none" stroke="#d0d0d0" stroke-width="2.1" stroke-linecap="round" stroke-linejoin="round"/>
<polyline points="361.2,80.3 370.6,89.4 361.2,98.6" fill="none" stroke="#686868" stroke-width="2.1" stroke-linecap="round" stroke-linejoin="round"/>
<path d="M420.1,80.8 Q431.9,74.2 443.7,80.8 C444.6,90.5 439.8,98.2 431.9,102.2 C424,98.2 419.2,90.5 420.1,80.8 Z" fill="none" stroke="#3fbff0" stroke-width="2.1" stroke-linejoin="round"/>
<rect x="428.6" y="83.8" width="2.4" height="10" rx="1" fill="#3fbff0"/>
<rect x="432.8" y="83.8" width="2.4" height="10" rx="1" fill="#3fbff0"/>
<path d="M484.3,78.7 L476.6,81.6 Q475.3,82.1 475.3,83.5 V90.2 Q475.3,97.2 484.3,101 Q493.3,97.2 493.3,90.2 V83.5 Q493.3,82.1 492,81.6 Z" fill="none" stroke="#bdbdbd" stroke-width="2" stroke-linejoin="round"/>
<path d="M484.3,78.7 L476.6,81.6 Q475.3,82.1 475.3,83.5 V90.2 Q475.3,97.2 484.3,101 Z" fill="#bdbdbd" stroke="#bdbdbd" stroke-width="2" stroke-linejoin="round"/>
<rect x="518.2" y="71.2" width="551.8" height="37.8" rx="10" fill="#353635" stroke="#4b4c4b" stroke-width="1.6"/>
<rect x="712" y="89.6" width="12.2" height="9" rx="1.6" fill="#dedede"/>
<path d="M714.6,89.8 V86.4 a3.5,3.5 0 0 1 7,0 V89.8" fill="none" stroke="#dedede" stroke-width="1.8"/>
<text x="733.3" y="97.6" font-family='"Liberation Sans", sans-serif' font-size="19.5" fill="#e8e8e8" text-anchor="start" font-weight="normal" font-style="normal" textLength="145.5" lengthAdjust="spacingAndGlyphs" stroke="#e8e8e8" stroke-width="0.35">docs.google.com</text>
<path d="M1060.2,89.8 A6.7,6.7 0 1 1 1053.5,84.1" fill="none" stroke="#cfcfcf" stroke-width="2" stroke-linecap="round"/>
<polyline points="1052.4,80.2 1056.6,84.2 1052.4,88.2" fill="none" stroke="#cfcfcf" stroke-width="2" stroke-linecap="round" stroke-linejoin="round"/>
<path d="M1307.6,83.5 H1305.3 a2.6,2.6 0 0 0 -2.6,2.6 V98.4 a2.6,2.6 0 0 0 2.6,2.6 H1319.3 a2.6,2.6 0 0 0 2.6,-2.6 V86.1 a2.6,2.6 0 0 0 -2.6,-2.6 H1317" fill="none" stroke="#bfbfbf" stroke-width="1.9"/>
<line x1="1312.3" y1="76" x2="1312.3" y2="91.6" stroke="#bfbfbf" stroke-width="1.9"/>
<polyline points="1308,80.2 1312.3,75.8 1316.6,80.2" fill="none" stroke="#bfbfbf" stroke-width="1.9" stroke-linejoin="round" stroke-linecap="round"/>
<line x1="1354.4" y1="88.9" x2="1373.2" y2="88.9" stroke="#bfbfbf" stroke-width="1.9"/>
<line x1="1363.7" y1="79.8" x2="1363.7" y2="98.5" stroke="#bfbfbf" stroke-width="1.9"/>
<rect x="1405.6" y="78.1" width="17.4" height="17" rx="3.4" fill="none" stroke="#bfbfbf" stroke-width="1.9"/>
<rect x="1411.5" y="83.5" width="17.4" height="17.2" rx="3.4" fill="#353635" stroke="#bfbfbf" stroke-width="1.9"/>
<text x="98.2" y="152.2" font-family='"Liberation Sans", sans-serif' font-size="17" fill="#202124" text-anchor="start" font-weight="normal" font-style="normal" textLength="29.5" lengthAdjust="spacingAndGlyphs" stroke="#202124" stroke-width="0.25">A71</text>
<polygon points="200.8,143.8 211,143.8 205.9,149.4" fill="#444746"/>
<line x1="229" y1="135.2" x2="229" y2="158.6" stroke="#d0d0d0" stroke-width="1.2"/>
<path d="M255.2,140.4 C255.4,138.2 253.1,137.3 252.1,139.5 C251.2,141.4 249.9,152.4 248.7,154.6 C247.8,156.5 245.8,156.4 245.6,154.6" fill="none" stroke="#a9abab" stroke-width="1.7" stroke-linecap="round"/>
<circle cx="255" cy="140.1" r="1.25" fill="#a9abab"/><circle cx="245.9" cy="154.5" r="1.25" fill="#a9abab"/>
<path d="M247.3,143.9 H252.6 M254.1,143.9 H258.4 M260.4,143.9 H264.1 M252.9,153.5 H257.4 M259.9,153.5 H264.2" fill="none" stroke="#a9abab" stroke-width="1.8"/>
<path d="M255.9,143.9 L262.5,153.5" fill="none" stroke="#a9abab" stroke-width="2.3"/>
<path d="M262.3,143.9 L255.3,153.5" fill="none" stroke="#a9abab" stroke-width="1.5"/>
<rect x="78.8" y="995" width="1378.4" height="52.299999999999955" fill="#f9fbfd" />
<rect x="1244" y="995" width="213.20000000000005" height="52.299999999999955" fill="#ffffff" />
<rect x="78.8" y="995" width="1378.4" height="1" fill="#e3e3e3" />
<rect x="1243" y="995" width="1" height="52.299999999999955" fill="#dadce0" />
<rect x="155.6" y="1015.5" width="19.9" height="2.1" fill="#444746" />
<rect x="155.6" y="1021.3" width="19.9" height="2.1" fill="#444746" />
<rect x="155.6" y="1027.2" width="19.9" height="2.1" fill="#444746" />
<rect x="211.2" y="996" width="94.8" height="51" fill="#e1e8f5" />
<rect x="211.8" y="1042.4" width="93.6" height="5" fill="#4a7f8a" />
<text x="229" y="1029.8" font-family='"Liberation Sans", sans-serif' font-size="19" fill="#0b57d0" text-anchor="start" font-weight="bold" font-style="normal" >Год</text>
<polygon points="278.7,1019.8 289.2,1019.8 283.95,1025.6" fill="#0b57d0"/>
<text x="322.8" y="1029.8" font-family='"Liberation Sans", sans-serif' font-size="19.5" fill="#444746" text-anchor="start" font-weight="normal" font-style="normal" textLength="70.8" lengthAdjust="spacingAndGlyphs" stroke="#444746" stroke-width="0.3">Лист10</text>
<polygon points="410.5,1019.8 421.1,1019.8 415.8,1025.6" fill="#444746"/>
<text x="455.8" y="1029.8" font-family='"Liberation Sans", sans-serif' font-size="19.5" fill="#444746" text-anchor="start" font-weight="normal" font-style="normal" textLength="61" lengthAdjust="spacingAndGlyphs" stroke="#444746" stroke-width="0.3">Лист9</text>
<polygon points="532.8,1019.8 543.4,1019.8 538.0999999999999,1025.6" fill="#444746"/>
<text x="578.8000000000001" y="1029.8" font-family='"Liberation Sans", sans-serif' font-size="19.5" fill="#444746" text-anchor="start" font-weight="normal" font-style="normal" stroke="#444746" stroke-width="0.3">5</text>
<polygon points="607,1019.8 617.6,1019.8 612.3,1025.6" fill="#444746"/>
<text x="653.1" y="1029.8" font-family='"Liberation Sans", sans-serif' font-size="19.5" fill="#444746" text-anchor="start" font-weight="normal" font-style="normal" stroke="#444746" stroke-width="0.3">6</text>
<polygon points="681.2,1019.8 691.8000000000001,1019.8 686.5,1025.6" fill="#444746"/>
<text x="726.9000000000001" y="1029.8" font-family='"Liberation Sans", sans-serif' font-size="19.5" fill="#444746" text-anchor="start" font-weight="normal" font-style="normal" stroke="#444746" stroke-width="0.3">7</text>
<polygon points="754.4,1019.8 765.0,1019.8 759.7,1025.6" fill="#444746"/>
<text x="800.0" y="1029.8" font-family='"Liberation Sans", sans-serif' font-size="19.5" fill="#444746" text-anchor="start" font-weight="normal" font-style="normal" stroke="#444746" stroke-width="0.3">8</text>
<polygon points="827.7,1019.8 838.3000000000001,1019.8 833.0,1025.6" fill="#444746"/>
<text x="873.1" y="1029.8" font-family='"Liberation Sans", sans-serif' font-size="19.5" fill="#444746" text-anchor="start" font-weight="normal" font-style="normal" stroke="#444746" stroke-width="0.3">9</text>
<polygon points="901,1019.8 911.6,1019.8 906.3,1025.6" fill="#444746"/>
<rect x="562" y="1042.4" width="72.79999999999995" height="5" fill="#3d7bd0" />
<rect x="636.3" y="1042.4" width="71.90000000000009" height="5" fill="#3d7bd0" />
<rect x="710" y="1042.4" width="72.20000000000005" height="5" fill="#3d7bd0" />
<rect x="784" y="1042.4" width="71.39999999999998" height="5" fill="#3d7bd0" />
<rect x="857" y="1042.4" width="72.20000000000005" height="5" fill="#3d7bd0" />
<rect x="931" y="1042.4" width="5.2000000000000455" height="5" fill="#3d7bd0" />
<line x1="938.6" y1="1008" x2="938.6" y2="1035" stroke="#c4c7c5" stroke-width="1.2"/>
<polyline points="975,1016.4 968,1022.6 975,1028.8" fill="none" stroke="#b4b4b4" stroke-width="2" stroke-linecap="round" stroke-linejoin="round"/>
<polyline points="1024,1016.4 1031,1022.6 1024,1028.8" fill="none" stroke="#444746" stroke-width="2" stroke-linecap="round" stroke-linejoin="round"/>
<path d="M1265,1011.8 H1281.4 a1.8,1.8 0 0 1 1.8,1.8 V1029.4 a1.8,1.8 0 0 1 -1.8,1.8 H1275.6 L1273.2,1033.6 L1270.8,1031.2 H1265 a1.8,1.8 0 0 1 -1.8,-1.8 V1013.6 a1.8,1.8 0 0 1 1.8,-1.8 Z" fill="#1e9e55"/>
<path d="M1273.2,1015.2 Q1273.9,1020.6 1279,1021.5 Q1273.9,1022.4 1273.2,1027.8 Q1272.5,1022.4 1267.4,1021.5 Q1272.5,1020.6 1273.2,1015.2 Z" fill="#fff"/>
<text x="1305.2" y="1028.3" font-family='"Liberation Sans", sans-serif' font-size="16.2" fill="#1e9e55" text-anchor="start" font-weight="normal" font-style="normal" textLength="122.5" lengthAdjust="spacingAndGlyphs" stroke="#1e9e55" stroke-width="0.3">Анализ данных</text>
<rect x="1395" y="977" width="1" height="18" fill="#e6e6e6" />
<rect x="1418" y="977" width="1" height="18" fill="#e6e6e6" />
<polygon points="1408.2,982.6 1408.2,988.6 1403.8,985.6" fill="#9a9a9a"/>
<polygon points="1427,982.6 1427,988.6 1431.4,985.6" fill="#9a9a9a"/>
<rect x="1441" y="932" width="16" height="1" fill="#e0e0e0" />
<rect x="1441" y="954" width="16" height="1" fill="#e0e0e0" />
<polygon points="1445.8,944 1452.8,944 1449.3,939.8" fill="#8a8a8a"/>
<polygon points="1445.8,963.6 1452.8,963.6 1449.3,968" fill="#8a8a8a"/>
</g>
<g clip-path="url(#tbclip)"><rect x="79.3" y="54.3" width="1377.4" height="992.5" rx="13.5" ry="13.5" fill="none" stroke="#5e5e5e" stroke-width="1.2"/></g>
</svg></body></html>
